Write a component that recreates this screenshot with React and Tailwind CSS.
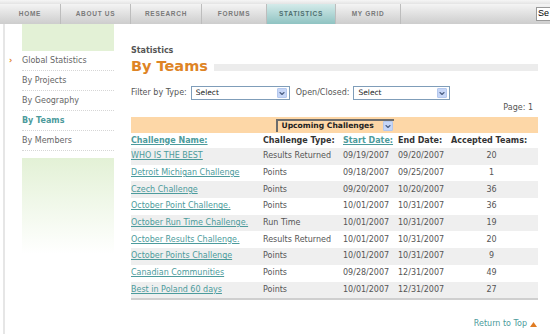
import { ChevronDown } from "lucide-react";

const navItems = [
  { label: "HOME", w: "w-[61px]" },
  { label: "ABOUT US", w: "w-[70px]" },
  { label: "RESEARCH", w: "w-[71px]" },
  { label: "FORUMS", w: "w-[65px]" },
  { label: "STATISTICS", w: "w-[69px]", active: true },
  { label: "MY GRID", w: "w-[65px]" },
];

const sideItems = ["Global Statistics", "By Projects", "By Geography", "By Teams", "By Members"];

const rows = [
  ["WHO IS THE BEST", "Results Returned", "09/19/2007", "09/20/2007", "20"],
  ["Detroit Michigan Challenge", "Points", "09/18/2007", "09/25/2007", "1"],
  ["Czech Challenge", "Points", "09/20/2007", "10/20/2007", "36"],
  ["October Point Challenge.", "Points", "10/01/2007", "10/31/2007", "36"],
  ["October Run Time Challenge.", "Run Time", "10/01/2007", "10/31/2007", "19"],
  ["October Results Challenge.", "Results Returned", "10/01/2007", "10/31/2007", "20"],
  ["October Points Challenge", "Points", "10/01/2007", "10/31/2007", "9"],
  ["Canadian Communities", "Points", "09/28/2007", "12/31/2007", "49"],
  ["Best in Poland 60 days", "Points", "10/01/2007", "12/31/2007", "27"],
];

function ArrowBtn() {
  return (
    <span className="flex h-[10px] w-[10px] shrink-0 items-center justify-center rounded-[1px] border border-[#b4c8ee] bg-[#c6d6f7] text-[#4d6185]">
      <ChevronDown size={9} strokeWidth={3.5} />
    </span>
  );
}

function SelectBox({ w }) {
  return (
    <div className={`flex h-[14px] ${w} items-center justify-between border border-[#7f9db9] bg-white pl-[4px] pr-[2px]`}>
      <span className="text-[7.5px] text-[#222]">Select</span>
      <ArrowBtn />
    </div>
  );
}

export default function App() {
  return (
    <div className="relative h-[334px] w-[550px] overflow-hidden bg-white font-['DejaVu_Sans',sans-serif] text-[8px] text-[#555]">
      <div className="h-[4px] bg-gradient-to-b from-[#f6f6f6] to-[#e4e4e4]" />
      <div className="flex h-[20px] bg-gradient-to-b from-[#f4f4f4] to-[#cdcdcd] font-['Liberation_Sans',sans-serif] text-[6.5px] font-bold tracking-[0.7px]">
        {navItems.map((n) => (
          <div
            key={n.label}
            className={`flex ${n.w} shrink-0 items-center justify-center border-r border-[#bdbdbd] ${
              n.active ? "bg-gradient-to-b from-[#d4ebea] to-[#8fc3c2] text-[#4f6f70]" : "text-[#7a7a7a]"
            }`}
          >
            {n.label}
          </div>
        ))}
        <div className="flex min-w-0 flex-1 items-center">
          <div className="ml-[135px] flex h-[14px] w-[40px] shrink-0 items-center border border-[#999] bg-white pl-[1px] text-[9px] font-normal tracking-normal text-black">
            Se
          </div>
        </div>
      </div>

      <div className="flex">
        <div className="ml-[3px] h-[310px] w-[111px] border-l-2 border-[#e6e6e6] pl-[17px]">
          <div className="h-[27px] w-[92px] bg-[#e3f1d6]" />
          <ul className="w-[92px]">
            {sideItems.map((s, i) => (
              <li
                key={s}
                className={`relative flex h-[20px] items-center border-b border-dotted border-[#d6d6d6] ${
                  s === "By Teams" ? "font-bold text-[#4c9b9c]" : "text-[#666]"
                }`}
              >
                {i === 0 && <span className="absolute left-[-13px] text-[8px] font-bold text-[#e07b22]">›</span>}
                {s}
              </li>
            ))}
          </ul>
          <div className="mt-[7px] h-[96px] w-[92px] bg-gradient-to-b from-[#e3f1d6] to-white" />
        </div>

        <div className="ml-[17px] w-[407px]">
          <div className="pt-[21px] text-[8px] font-bold text-[#555]">Statistics</div>
          <div className="flex items-center">
            <h1 className="text-[14.5px] font-bold leading-[18px] text-[#de8425]">By Teams</h1>
            <div className="ml-[6px] mt-[2px] h-[7px] flex-1 bg-[#ececec]" />
          </div>

          <div className="mt-[11px] flex items-center gap-[4px] text-[#555]">
            <span>Filter by Type:</span>
            <SelectBox w="w-[99px]" />
            <span className="ml-[2px]">Open/Closed:</span>
            <SelectBox w="w-[97px]" />
          </div>

          <div className="mt-[2px] pr-[5px] text-right leading-[12px] text-[#555]">Page: 1</div>

          <div className="mt-[3px] flex h-[16px] items-center justify-center bg-[#fdd7a7]">
            <div className="flex h-[13px] w-[118px] items-center justify-between border-l-2 border-t-2 border-[#6c6c6c] pl-[4px] pr-[1px]">
              <span className="whitespace-nowrap text-[7.6px] font-bold text-[#222]">Upcoming Challenges</span>
              <ArrowBtn />
            </div>
          </div>

          <div className="border-b-2 border-[#cfcfcf]">
            <div className="grid h-[15px] grid-cols-[132px_80px_55px_53px_1fr] items-center font-bold text-[#333]">
              <a className="text-[#4c9b9c] underline">Challenge Name:</a>
              <span>Challenge Type:</span>
              <a className="text-[#4c9b9c] underline">Start Date:</a>
              <span>End Date:</span>
              <span>Accepted Teams:</span>
            </div>
            {rows.map((r, i) => (
              <div
                key={r[0]}
                className={`grid h-[16.7px] grid-cols-[132px_80px_55px_53px_1fr] items-center ${
                  i % 2 === 0 ? "bg-[#efefef]" : "bg-white"
                }`}
              >
                <a className="text-[#4c9b9c] underline">{r[0]}</a>
                <span>{r[1]}</span>
                <span>{r[2]}</span>
                <span>{r[3]}</span>
                <span className="pr-[6px] text-center">{r[4]}</span>
              </div>
            ))}
          </div>

          <div className="mt-[18px] flex items-center justify-end gap-[3px] pr-[1px] text-[#4c9b9c]">
            <span>Return to Top</span>
            <svg width="7" height="5" viewBox="0 0 7 5">
              <path d="M3.5 0 L7 5 L0 5 Z" fill="#e07b22" />
            </svg>
          </div>
        </div>
      </div>
    </div>
  );
}
